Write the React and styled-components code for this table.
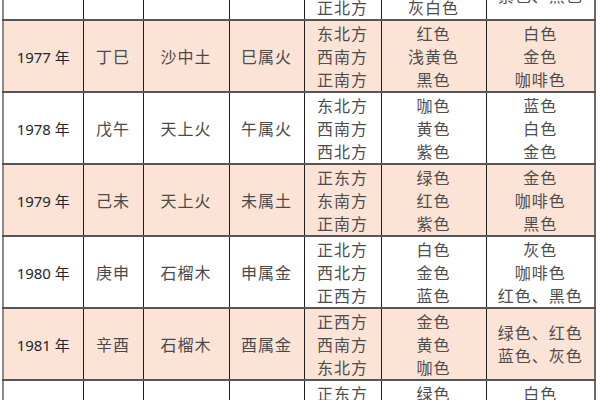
import React from "react";
import styled, { createGlobalStyle } from "styled-components";

const GlobalStyle = createGlobalStyle`
  html, body {
    margin: 0;
    padding: 0;
    background: #ffffff;
    overflow: hidden;
  }
`;

const Page = styled.div`
  width: 600px;
  height: 400px;
  overflow: hidden;
  padding-left: 2px;
  box-sizing: border-box;
`;

const Table = styled.table`
  margin-top: -53px;
  border-collapse: collapse;
  table-layout: fixed;
  width: 594px;
  font-family: "Noto Sans CJK SC", "Noto Sans", sans-serif;
  border-left: 2px solid #8a8a8a;
  border-right: 2px solid #6a6a6a;
`;

const Row = styled.tr`
  height: 72px;
  background: ${(p) => (p.$shaded ? "#fbe3d6" : "#ffffff")};
`;

const Cell = styled.td`
  padding: 0;
  text-align: center;
  vertical-align: middle;
  border-top: 2px solid #555555;
  border-bottom: 2px solid #555555;
  border-left: 1px solid #1e1e1e;
  border-right: 1px solid #1e1e1e;
  color: ${(p) => (p.$year ? "#262626" : "#4a4a4a")};
  font-size: ${(p) => (p.$year ? "15px" : "16px")};
  font-family: ${(p) =>
    p.$year
      ? `"Noto Sans", "Noto Sans CJK SC", sans-serif`
      : `"Noto Sans CJK SC", sans-serif`};
  letter-spacing: ${(p) => (p.$year ? "0" : "1px")};
  white-space: nowrap;
`;

const Lines = styled.div`
  display: flex;
  flex-direction: column;
  align-items: center;
  font-size: 16px;
  line-height: 23px;
  color: #4d4d4d;
  letter-spacing: 1px;
`;

const rows = [
  {
    year: "1976 年", stem: "丙辰", nayin: "沙中土", branch: "辰属土",
    dirs: ["西北方", "东南方", "正北方"],
    colors: ["黄色", "白色", "灰白色"],
    lucky: ["红色、金色", "紫色、黑色"],
  },
  {
    year: "1977 年", stem: "丁巳", nayin: "沙中土", branch: "巳属火",
    dirs: ["东北方", "西南方", "正南方"],
    colors: ["红色", "浅黄色", "黑色"],
    lucky: ["白色", "金色", "咖啡色"],
  },
  {
    year: "1978 年", stem: "戊午", nayin: "天上火", branch: "午属火",
    dirs: ["东北方", "西南方", "西北方"],
    colors: ["咖色", "黄色", "紫色"],
    lucky: ["蓝色", "白色", "金色"],
  },
  {
    year: "1979 年", stem: "己未", nayin: "天上火", branch: "未属土",
    dirs: ["正东方", "东南方", "正南方"],
    colors: ["绿色", "红色", "紫色"],
    lucky: ["金色", "咖啡色", "黑色"],
  },
  {
    year: "1980 年", stem: "庚申", nayin: "石榴木", branch: "申属金",
    dirs: ["正北方", "西北方", "正西方"],
    colors: ["白色", "金色", "蓝色"],
    lucky: ["灰色", "咖啡色", "红色、黑色"],
  },
  {
    year: "1981 年", stem: "辛酉", nayin: "石榴木", branch: "酉属金",
    dirs: ["正西方", "西南方", "东北方"],
    colors: ["金色", "黄色", "咖色"],
    lucky: ["绿色、红色", "蓝色、灰色"],
  },
  {
    year: "1982 年", stem: "壬戌", nayin: "大海水", branch: "戌属土",
    dirs: ["正东方", "东南方", "正南方"],
    colors: ["绿色", "红色", "黄色"],
    lucky: ["白色", "金色", "紫色"],
  },
];

const widths = [80, 60, 86, 75, 77, 105, 109];

const App = () => {
  return (
    <Page>
      <GlobalStyle />
      <Table>
        <colgroup>
          {widths.map((w, i) => (
            <col key={i} style={{ width: w }} />
          ))}
        </colgroup>
        <tbody>
          {rows.map((row, i) => (
            <Row key={row.year} $shaded={i % 2 === 1}>
              <Cell $year>{row.year}</Cell>
              <Cell>{row.stem}</Cell>
              <Cell>{row.nayin}</Cell>
              <Cell>{row.branch}</Cell>
              {[row.dirs, row.colors, row.lucky].map((list, j) => (
                <Cell key={j}>
                  <Lines>
                    {list.map((t) => (
                      <span key={t}>{t}</span>
                    ))}
                  </Lines>
                </Cell>
              ))}
            </Row>
          ))}
        </tbody>
      </Table>
    </Page>
  );
};

export default App;
